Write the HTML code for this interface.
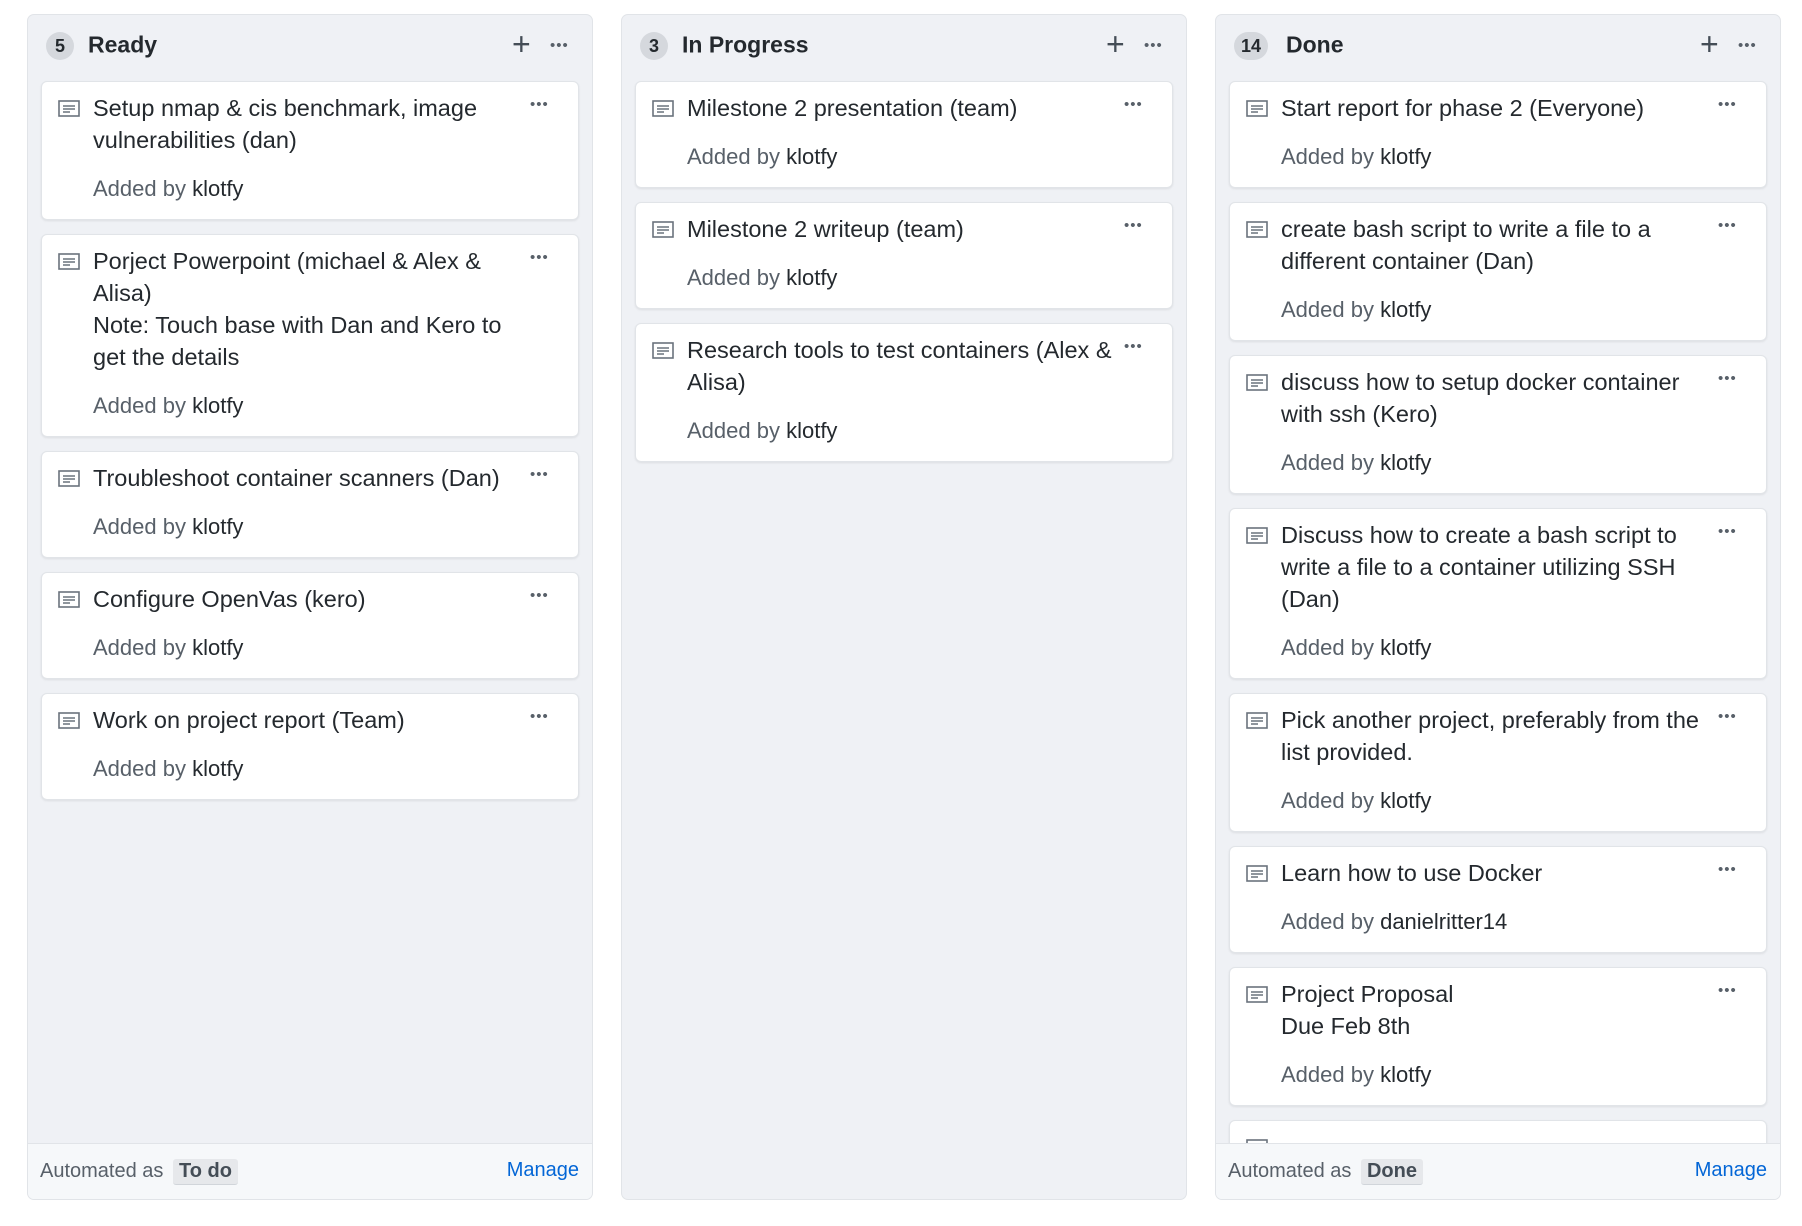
<!DOCTYPE html>
<html><head><meta charset="utf-8"><style>
*{box-sizing:border-box;margin:0;padding:0}
body{width:1802px;height:1226px;background:#fff;font-family:"Liberation Sans",Arial,sans-serif;color:#24292e;position:relative;overflow:hidden}
.col{position:absolute;top:14px;width:566px;height:1186px;background:#eff1f5;border:1px solid #e1e4e8;border-radius:7px;overflow:hidden}
.hdr{position:absolute;top:0;left:0;right:0;height:62px}
.cnt{position:absolute;left:18px;top:17px;height:28px;min-width:28px;padding:0 7px;border-radius:14px;background:#d5d8dd;font-size:18px;font-weight:bold;line-height:28px;text-align:center;color:#24292e}
.ttl{position:absolute;top:30px;transform:translateY(-50%);font-size:23px;font-weight:bold}
.plus{position:absolute;left:484px;top:13px;font-size:32px;line-height:32px;color:#444d56;font-weight:300}
.hd{position:absolute;left:522px;top:22px;font-size:15px;letter-spacing:1px;color:#586069}
.body{position:absolute;top:66px;left:13px;width:538px}
.card{position:relative;background:#fff;border:1px solid #e1e4e8;border-radius:6px;box-shadow:0 1px 2px rgba(0,0,0,.08);padding:10px 0 14px 51px;margin-bottom:14px}
.card .t{font-size:23.5px;line-height:32px;white-space:nowrap}
.card .a{font-size:22px;line-height:32px;margin-top:17px;color:#586069}
.card .a b{font-weight:normal;color:#24292e}
.card svg{position:absolute;left:16px;top:18px}
.dots{position:absolute;left:488px;top:14px;font-size:15px;color:#586069;letter-spacing:1px}
.foot{position:absolute;left:0;right:0;bottom:0;height:56px;background:#f6f8fa;border-top:1px solid #e1e4e8;font-size:20px;color:#586069}
.foot .l{position:absolute;left:12px;top:15px}
.pill{display:inline-block;background:#e6e8eb;border-radius:3px;padding:1px 6px;font-weight:bold;color:#444d56;margin-left:4px;border-bottom:1px solid #d1d5da}
.foot .m{position:absolute;right:13px;top:15px;color:#0366d6}
</style></head><body>

<div class="col" style="left:27px">
 <div class="hdr"><div class="cnt">5</div><div class="ttl" style="left:60px">Ready</div><div class="plus">+</div><div class="hd">•••</div></div>
 <div class="body">
  <div class="card"><svg width="22" height="17" viewBox="0 0 22 17"><rect x="1" y="1" width="20" height="15" fill="none" stroke="#6a737d" stroke-width="1.6"/><path d="M5 6h12M5 9h12M5 12h7" stroke="#6a737d" stroke-width="1.4"/></svg><div class="dots">•••</div><div class="t">Setup nmap &amp; cis benchmark, image<br>vulnerabilities (dan)</div><div class="a">Added by <b>klotfy</b></div></div>
  <div class="card"><svg width="22" height="17" viewBox="0 0 22 17"><rect x="1" y="1" width="20" height="15" fill="none" stroke="#6a737d" stroke-width="1.6"/><path d="M5 6h12M5 9h12M5 12h7" stroke="#6a737d" stroke-width="1.4"/></svg><div class="dots">•••</div><div class="t">Porject Powerpoint (michael &amp; Alex &amp;<br>Alisa)<br>Note: Touch base with Dan and Kero to<br>get the details</div><div class="a">Added by <b>klotfy</b></div></div>
  <div class="card"><svg width="22" height="17" viewBox="0 0 22 17"><rect x="1" y="1" width="20" height="15" fill="none" stroke="#6a737d" stroke-width="1.6"/><path d="M5 6h12M5 9h12M5 12h7" stroke="#6a737d" stroke-width="1.4"/></svg><div class="dots">•••</div><div class="t">Troubleshoot container scanners (Dan)</div><div class="a">Added by <b>klotfy</b></div></div>
  <div class="card"><svg width="22" height="17" viewBox="0 0 22 17"><rect x="1" y="1" width="20" height="15" fill="none" stroke="#6a737d" stroke-width="1.6"/><path d="M5 6h12M5 9h12M5 12h7" stroke="#6a737d" stroke-width="1.4"/></svg><div class="dots">•••</div><div class="t">Configure OpenVas (kero)</div><div class="a">Added by <b>klotfy</b></div></div>
  <div class="card"><svg width="22" height="17" viewBox="0 0 22 17"><rect x="1" y="1" width="20" height="15" fill="none" stroke="#6a737d" stroke-width="1.6"/><path d="M5 6h12M5 9h12M5 12h7" stroke="#6a737d" stroke-width="1.4"/></svg><div class="dots">•••</div><div class="t">Work on project report (Team)</div><div class="a">Added by <b>klotfy</b></div></div>
 </div>
 <div class="foot"><span class="l">Automated as <span class="pill">To do</span></span><span class="m">Manage</span></div>
</div>

<div class="col" style="left:621px">
 <div class="hdr"><div class="cnt">3</div><div class="ttl" style="left:60px">In Progress</div><div class="plus">+</div><div class="hd">•••</div></div>
 <div class="body">
  <div class="card"><svg width="22" height="17" viewBox="0 0 22 17"><rect x="1" y="1" width="20" height="15" fill="none" stroke="#6a737d" stroke-width="1.6"/><path d="M5 6h12M5 9h12M5 12h7" stroke="#6a737d" stroke-width="1.4"/></svg><div class="dots">•••</div><div class="t">Milestone 2 presentation (team)</div><div class="a">Added by <b>klotfy</b></div></div>
  <div class="card"><svg width="22" height="17" viewBox="0 0 22 17"><rect x="1" y="1" width="20" height="15" fill="none" stroke="#6a737d" stroke-width="1.6"/><path d="M5 6h12M5 9h12M5 12h7" stroke="#6a737d" stroke-width="1.4"/></svg><div class="dots">•••</div><div class="t">Milestone 2 writeup (team)</div><div class="a">Added by <b>klotfy</b></div></div>
  <div class="card"><svg width="22" height="17" viewBox="0 0 22 17"><rect x="1" y="1" width="20" height="15" fill="none" stroke="#6a737d" stroke-width="1.6"/><path d="M5 6h12M5 9h12M5 12h7" stroke="#6a737d" stroke-width="1.4"/></svg><div class="dots">•••</div><div class="t">Research tools to test containers (Alex &amp;<br>Alisa)</div><div class="a">Added by <b>klotfy</b></div></div>
 </div>
</div>

<div class="col" style="left:1215px">
 <div class="hdr"><div class="cnt">14</div><div class="ttl" style="left:70px">Done</div><div class="plus">+</div><div class="hd">•••</div></div>
 <div class="body">
  <div class="card"><svg width="22" height="17" viewBox="0 0 22 17"><rect x="1" y="1" width="20" height="15" fill="none" stroke="#6a737d" stroke-width="1.6"/><path d="M5 6h12M5 9h12M5 12h7" stroke="#6a737d" stroke-width="1.4"/></svg><div class="dots">•••</div><div class="t">Start report for phase 2 (Everyone)</div><div class="a">Added by <b>klotfy</b></div></div>
  <div class="card"><svg width="22" height="17" viewBox="0 0 22 17"><rect x="1" y="1" width="20" height="15" fill="none" stroke="#6a737d" stroke-width="1.6"/><path d="M5 6h12M5 9h12M5 12h7" stroke="#6a737d" stroke-width="1.4"/></svg><div class="dots">•••</div><div class="t">create bash script to write a file to a<br>different container (Dan)</div><div class="a">Added by <b>klotfy</b></div></div>
  <div class="card"><svg width="22" height="17" viewBox="0 0 22 17"><rect x="1" y="1" width="20" height="15" fill="none" stroke="#6a737d" stroke-width="1.6"/><path d="M5 6h12M5 9h12M5 12h7" stroke="#6a737d" stroke-width="1.4"/></svg><div class="dots">•••</div><div class="t">discuss how to setup docker container<br>with ssh (Kero)</div><div class="a">Added by <b>klotfy</b></div></div>
  <div class="card"><svg width="22" height="17" viewBox="0 0 22 17"><rect x="1" y="1" width="20" height="15" fill="none" stroke="#6a737d" stroke-width="1.6"/><path d="M5 6h12M5 9h12M5 12h7" stroke="#6a737d" stroke-width="1.4"/></svg><div class="dots">•••</div><div class="t">Discuss how to create a bash script to<br>write a file to a container utilizing SSH<br>(Dan)</div><div class="a">Added by <b>klotfy</b></div></div>
  <div class="card"><svg width="22" height="17" viewBox="0 0 22 17"><rect x="1" y="1" width="20" height="15" fill="none" stroke="#6a737d" stroke-width="1.6"/><path d="M5 6h12M5 9h12M5 12h7" stroke="#6a737d" stroke-width="1.4"/></svg><div class="dots">•••</div><div class="t">Pick another project, preferably from the<br>list provided.</div><div class="a">Added by <b>klotfy</b></div></div>
  <div class="card"><svg width="22" height="17" viewBox="0 0 22 17"><rect x="1" y="1" width="20" height="15" fill="none" stroke="#6a737d" stroke-width="1.6"/><path d="M5 6h12M5 9h12M5 12h7" stroke="#6a737d" stroke-width="1.4"/></svg><div class="dots">•••</div><div class="t">Learn how to use Docker</div><div class="a">Added by <b>danielritter14</b></div></div>
  <div class="card"><svg width="22" height="17" viewBox="0 0 22 17"><rect x="1" y="1" width="20" height="15" fill="none" stroke="#6a737d" stroke-width="1.6"/><path d="M5 6h12M5 9h12M5 12h7" stroke="#6a737d" stroke-width="1.4"/></svg><div class="dots">•••</div><div class="t">Project Proposal<br>Due Feb 8th</div><div class="a">Added by <b>klotfy</b></div></div>
  <div class="card"><svg width="22" height="17" viewBox="0 0 22 17"><rect x="1" y="1" width="20" height="15" fill="none" stroke="#6a737d" stroke-width="1.6"/><path d="M5 6h12M5 9h12M5 12h7" stroke="#6a737d" stroke-width="1.4"/></svg><div class="t">&nbsp;</div><div class="a">&nbsp;</div></div>
 </div>
 <div class="foot"><span class="l">Automated as <span class="pill">Done</span></span><span class="m">Manage</span></div>
</div>

</body></html>
